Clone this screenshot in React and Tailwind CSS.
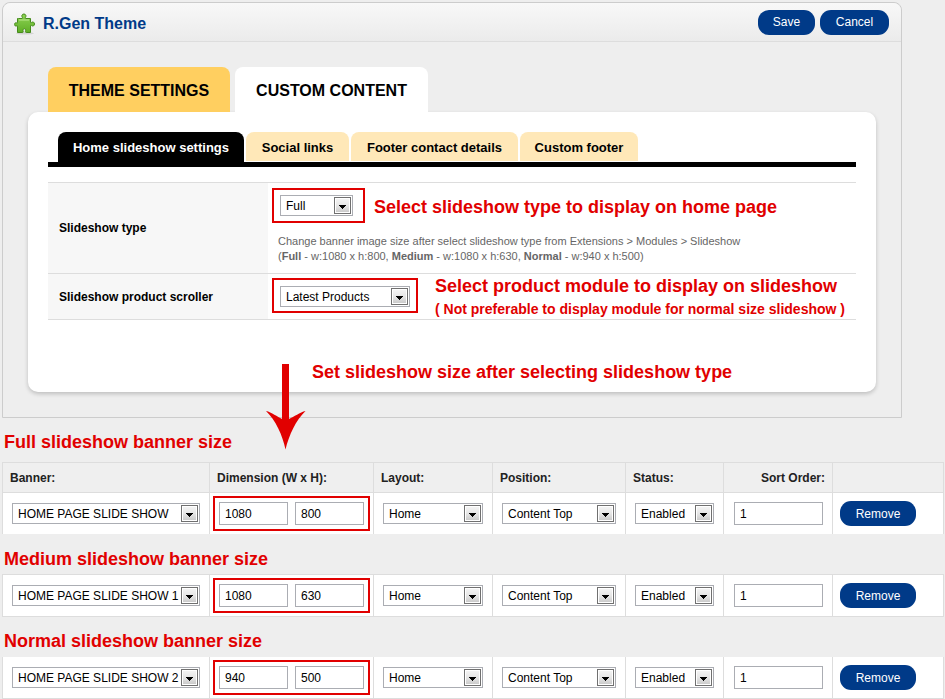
import React from "react";

const BANNERS = [
  { id: "full", title: "Full slideshow banner size", banner: "HOME PAGE SLIDE SHOW", width: "1080", height: "800" },
  { id: "medium", title: "Medium slideshow banner size", banner: "HOME PAGE SLIDE SHOW 1", width: "1080", height: "630" },
  { id: "normal", title: "Normal slideshow banner size", banner: "HOME PAGE SLIDE SHOW 2", width: "940", height: "500" },
];

const HEADING_SPACING = {
  full: "pt-3 pb-2",
  medium: "pt-[13px] pb-[3px]",
  normal: "pt-3 pb-1",
};

const CELL_BORDERS = {
  full: "",
  medium: "border-t border-b",
  normal: "border-b",
};

function PuzzleIcon() {
  return (
    <svg width="22" height="22" viewBox="0 0 22 22" aria-hidden="true">
      <defs>
        <linearGradient id="puzzle" x1="0" y1="0" x2="0" y2="1">
          <stop offset="0" stopColor="#8fd455" />
          <stop offset="1" stopColor="#5fae26" />
        </linearGradient>
      </defs>
      <ellipse cx="11" cy="20.3" rx="9" ry="1.2" fill="#d3d3d3" />
      <path
        d="M4.5 5.5H8.3C8.8 5.5 8.8 5 8.4 4.5C7.2 2.9 8 1 9.9 1C11.8 1 12.6 2.9 11.4 4.5C11 5 11 5.5 11.5 5.5H16.5V9.3C16.5 9.9 17 9.9 17.6 9.4C19 8.4 20.5 9.3 20.5 11C20.5 12.7 19 13.6 17.6 12.6C17 12.1 16.5 12.1 16.5 12.8V19.5H12.3C11.8 19.5 11.4 19 11.4 18.5C12 17 11.6 15.8 10.5 15.8C9.4 15.8 8.6 17 9.2 18.5C9.2 19 9.2 19.5 8.7 19.5H3.5V13.2C3.5 12.6 3.2 12.6 2.7 12.9C1.5 13.5 .6 12.7 .6 11.4C.6 10.1 1.5 9.3 2.7 9.9C3.2 10.2 3.5 10.2 3.5 9.6V5.5Z"
        fill="url(#puzzle)"
        stroke="#458a1b"
        strokeWidth="1"
      />
      <path d="M5 7H15" stroke="#b9e88c" strokeWidth="1" />
    </svg>
  );
}

function Select({ id, label, value, className }) {
  return (
    <span className={"relative inline-block h-[21px] align-middle " + className}>
      <select
        id={id}
        aria-label={label}
        defaultValue={value}
        className="block h-[21px] w-full appearance-none border border-[#abadb3] bg-white pt-0.5 pr-5 pl-[5px] text-xs leading-[17px] text-black"
      >
        <option>{value}</option>
      </select>
      <svg className="pointer-events-none absolute top-0.5 right-0.5" width="17" height="17" viewBox="0 0 17 17" aria-hidden="true">
        <defs>
          <linearGradient id="drop" x1="0" y1="0" x2="0" y2="1">
            <stop offset="0" stopColor="#f3f3f3" />
            <stop offset="0.5" stopColor="#e6e6e6" />
            <stop offset="1" stopColor="#cbcbcb" />
          </linearGradient>
        </defs>
        <rect x="0.5" y="0.5" width="16" height="16" fill="#fff" stroke="#707070" />
        <rect x="2" y="2" width="13" height="13" fill="url(#drop)" />
        <path d="M5 8H12V9H11V10H10V11H9V12H8V11H7V10H6V9H5Z" fill="#000" />
      </svg>
    </span>
  );
}

function TextBox({ label, value, className }) {
  return (
    <input
      type="text"
      aria-label={label}
      defaultValue={value}
      className={"block h-[23px] border border-[#abadb3] bg-white px-[5px] text-xs text-black " + className}
    />
  );
}

function PillButton({ children, className }) {
  return (
    <button type="button" className={"h-[25px] rounded-[11px] bg-[#003a88] text-xs text-white " + className}>
      {children}
    </button>
  );
}

function SubTab({ active, className, children }) {
  return (
    <button
      type="button"
      className={
        "rounded-t-lg text-[13px] font-bold " +
        (active ? "h-[30px] bg-black pt-px text-white " : "h-[29px] bg-[#ffe8b8] pt-0.5 text-black ") +
        className
      }
    >
      {children}
    </button>
  );
}

function Note({ className, children }) {
  return <p className={"font-bold text-[#e10000] " + className}>{children}</p>;
}

function ArrowDown({ className }) {
  return (
    <svg className={className} width="40" height="86" viewBox="0 0 40 86" aria-hidden="true">
      <path d="M16 0H23V55C28 53 34 48 39.5 47C30 56 23 71 19.5 85.5C16.5 71 9.5 56 0 47C5.5 48 11.5 53 16 55Z" fill="#e10000" />
    </svg>
  );
}

function BannerTable({ row, withHead }) {
  const cell = "border-r border-[#ddd] bg-white p-0 align-middle " + CELL_BORDERS[row.id];
  const head = "h-[31px] border-t border-r border-b border-[#ddd] bg-[#efefef] px-[7px] py-0 text-left font-bold";
  return (
    <table className="w-full table-fixed border-separate border-spacing-0 border-l border-[#ddd] text-xs text-[#222]">
      <colgroup>
        <col className="w-[22%]" />
        <col className="w-[164px]" />
        <col className="w-[119px]" />
        <col className="w-[133px]" />
        <col className="w-[98px]" />
        <col className="w-[109px]" />
        <col />
      </colgroup>
      {withHead && (
        <thead>
          <tr>
            <th className={head}>Banner:</th>
            <th className={head}>Dimension (W x H):</th>
            <th className={head}>Layout:</th>
            <th className={head}>Position:</th>
            <th className={head}>Status:</th>
            <th className={head}>
              <span className="block text-right">Sort Order:</span>
            </th>
            <td className={head}></td>
          </tr>
        </thead>
      )}
      <tbody>
        <tr>
          <td className={cell}>
            <div className="flex px-[9px]">
              <Select label="Banner" value={row.banner} className="w-full" />
            </div>
          </td>
          <td className={cell}>
            <div className="m-[3px] flex h-[35px] items-center gap-[7px] border-2 border-[#e10000] px-1">
              <TextBox label="Width" value={row.width} className="w-[69px]" />
              <TextBox label="Height" value={row.height} className="w-[69px]" />
            </div>
          </td>
          <td className={cell}>
            <div className="flex px-[9px]">
              <Select label="Layout" value="Home" className="w-full" />
            </div>
          </td>
          <td className={cell}>
            <div className="flex px-[9px]">
              <Select label="Position" value="Content Top" className="w-[114px]" />
            </div>
          </td>
          <td className={cell}>
            <div className="flex px-[9px]">
              <Select label="Status" value="Enabled" className="w-full" />
            </div>
          </td>
          <td className={cell}>
            <div className="flex justify-end px-[9px]">
              <TextBox label="Sort order" value="1" className="w-[89px]" />
            </div>
          </td>
          <td className={cell}>
            <div className="flex px-[7px]">
              <PillButton className="w-[76px]">Remove</PillButton>
            </div>
          </td>
        </tr>
      </tbody>
    </table>
  );
}

export default function App() {
  return (
    <main className="min-h-screen bg-[#eee] pt-0.5 pr-px pl-0.5 font-['Liberation_Sans',Arial,sans-serif] text-xs text-black">
      <section className="mr-[42px] rounded-t-lg border border-[#ccc] bg-[#eee]">
        <header className="flex h-[39px] items-center rounded-t-lg border-b border-[#ddd] bg-linear-to-b from-[#f8f8f8] to-[#ebebeb] pr-3 pl-[11px]">
          <div className="flex flex-1 items-center gap-[7px] pt-[3px]">
            <PuzzleIcon />
            <h1 className="text-base font-bold text-[#003a88]">R.Gen Theme</h1>
          </div>
          <div className="flex gap-[5px]">
            <PillButton className="w-[57px]">Save</PillButton>
            <PillButton className="w-[69px]">Cancel</PillButton>
          </div>
        </header>

        <div className="p-[25px]">
          <nav className="ml-5 flex gap-[5px]" aria-label="Theme sections">
            <button type="button" className="h-[45px] w-[182px] rounded-t-lg bg-[#ffcf60] pt-0.5 text-base font-bold">
              THEME SETTINGS
            </button>
            <button type="button" className="h-[45px] w-[193px] rounded-t-lg bg-white pt-0.5 text-base font-bold">
              CUSTOM CONTENT
            </button>
          </nav>

          <div className="rounded-[10px] bg-white px-5 pt-5 pb-2 shadow-[0_2px_4px_rgba(0,0,0,0.2)]">
            <nav className="flex items-start gap-0.5 border-b-[5px] border-black pl-2.5" aria-label="Custom content sections">
              <SubTab active className="w-[186px]">Home slideshow settings</SubTab>
              <SubTab className="w-[103px]">Social links</SubTab>
              <SubTab className="w-[167px]">Footer contact details</SubTab>
              <SubTab className="w-[118px]">Custom footer</SubTab>
            </nav>

            <div className="mt-[15px] border-t border-[#ddd]">
              <div className="flex border-b border-[#ddd]">
                <div className="flex w-[220px] shrink-0 items-center bg-[#f7f7f7] pl-[11px] font-bold">
                  <label htmlFor="slideshow-type">Slideshow type</label>
                </div>
                <div className="flex-1 pt-[5px] pb-[9px] pl-1">
                  <div className="flex items-center gap-[9px]">
                    <div className="flex h-[35px] w-[93px] items-center border-2 border-[#e10000] pl-1.5">
                      <Select id="slideshow-type" value="Full" className="w-[73px]" />
                    </div>
                    <Note className="pt-0.5 text-lg leading-6">Select slideshow type to display on home page</Note>
                  </div>
                  <p className="mt-[11px] pl-1.5 text-[11px] leading-[15px] text-[#666]">
                    Change banner image size after select slideshow type from Extensions &gt; Modules &gt; Slideshow
                    <br />
                    (<b>Full</b> - w:1080 x h:800, <b>Medium</b> - w:1080 x h:630, <b>Normal</b> - w:940 x h:500)
                  </p>
                </div>
              </div>
              <div className="flex border-b border-[#ddd]">
                <div className="flex w-[220px] shrink-0 items-center bg-[#f7f7f7] pl-[11px] font-bold">
                  <label htmlFor="slideshow-scroller">Slideshow product scroller</label>
                </div>
                <div className="flex h-[45px] flex-1 gap-[17px] pl-1">
                  <div className="mt-1 flex h-[35px] w-[146px] shrink-0 items-center border-2 border-[#e10000] pt-px pl-1.5">
                    <Select id="slideshow-scroller" value="Latest Products" className="w-[130px]" />
                  </div>
                  <div>
                    <Note className="text-lg leading-6">Select product module to display on slideshow</Note>
                    <Note className="text-sm leading-[22px]">( Not preferable to display module for normal size slideshow )</Note>
                  </div>
                </div>
              </div>
            </div>

            <div className="relative mt-10 pl-[264px]">
              <Note className="text-lg leading-6">Set slideshow size after selecting slideshow type</Note>
              <ArrowDown className="absolute top-1 left-[218px]" />
            </div>
          </div>
        </div>
      </section>

      {BANNERS.map((row) => (
        <section key={row.id}>
          <h2 className={"pl-0.5 text-lg leading-6 font-bold text-[#e10000] " + HEADING_SPACING[row.id]}>{row.title}</h2>
          <BannerTable row={row} withHead={row.id === "full"} />
        </section>
      ))}
    </main>
  );
}
